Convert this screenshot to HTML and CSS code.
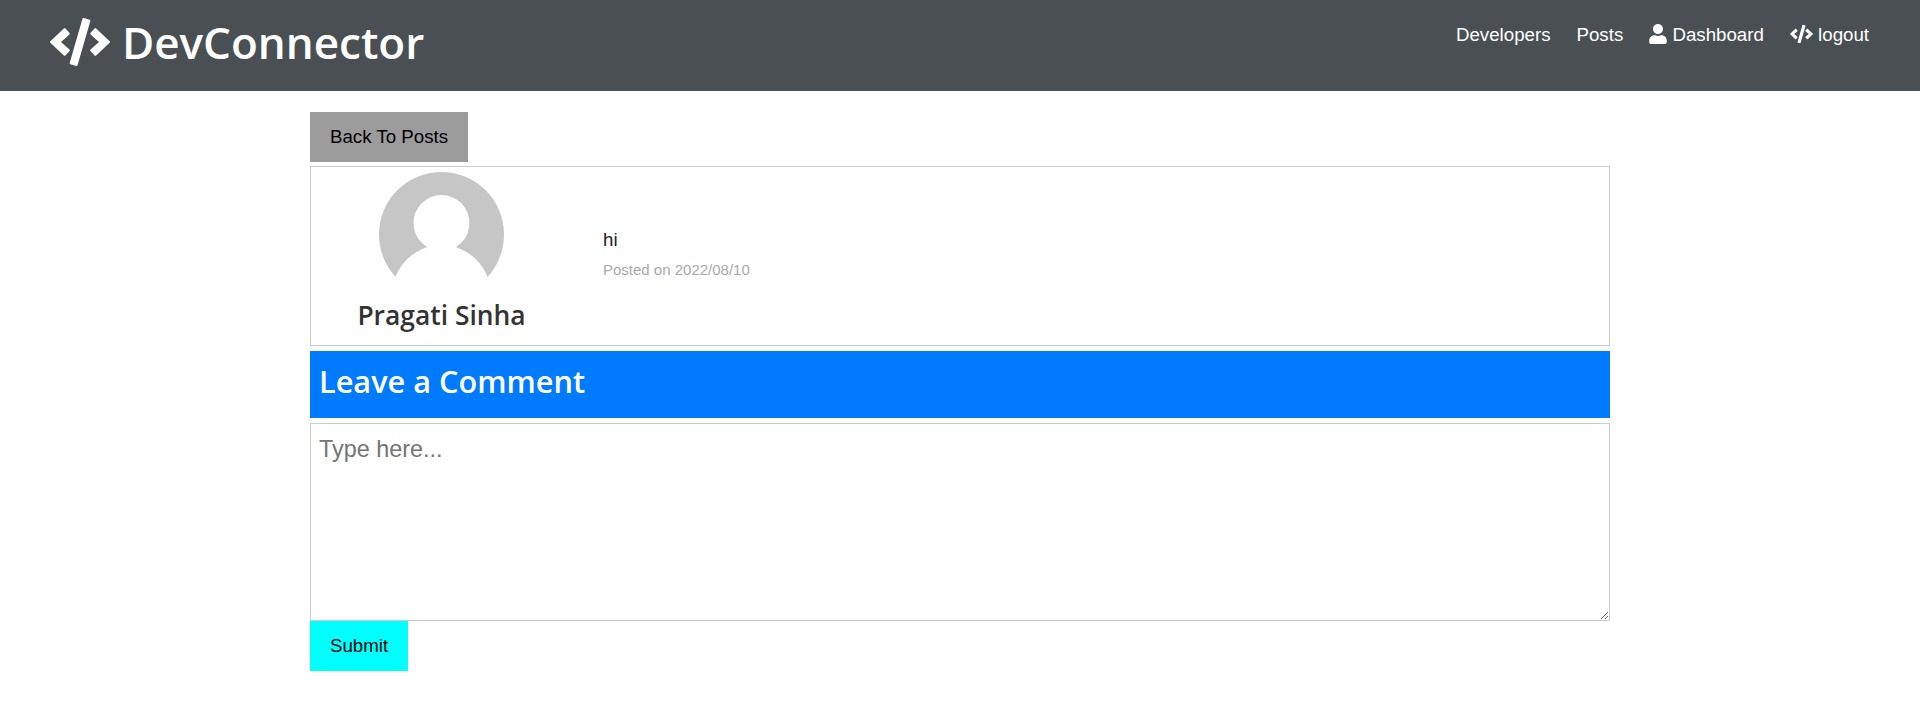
FILE: index.html
```html
<!DOCTYPE html>
<html lang="en">
<head>
<meta charset="utf-8">
<title>DevConnector</title>
<link rel="stylesheet" href="styles.css">
</head>
<body>
<nav class="navbar">
  <a class="brand" href="#">
    <svg class="brand-icon" viewBox="0 0 640 512"><path d="M278.9 511.5l-61-17.7c-6.4-1.8-10-8.5-8.2-14.9L346.2 8.7c1.8-6.4 8.5-10 14.9-8.2l61 17.7c6.4 1.8 10 8.5 8.2 14.9L293.8 503.3c-1.9 6.4-8.5 10.1-14.9 8.2zm-114-112.2l43.5-46.4c4.6-4.9 4.3-12.7-.8-17.2L117 256l90.6-79.7c5.1-4.5 5.5-12.3.8-17.2l-43.5-46.4c-4.5-4.8-12.1-5.1-17-.5L3.8 247.2c-5.1 4.7-5.1 12.8 0 17.5l144.1 135.1c4.9 4.6 12.5 4.4 17-.5zm327.2.6l144.1-135.1c5.1-4.7 5.1-12.8 0-17.5L492.1 112.1c-4.8-4.5-12.4-4.3-17 .5L431.6 159c-4.6 4.9-4.3 12.7.8 17.2L523 256l-90.6 79.7c-5.1 4.5-5.5 12.3-.8 17.2l43.5 46.4c4.5 4.9 12.1 5.1 17 .6z"/></svg>
    <span>DevConnector</span>
  </a>
  <ul class="nav-links">
    <li><a href="#">Developers</a></li>
    <li><a href="#">Posts</a></li>
    <li><a href="#"><svg class="nav-icon user" viewBox="0 0 448 512"><path d="M224 256c70.7 0 128-57.3 128-128S294.7 0 224 0 96 57.3 96 128s57.3 128 128 128zm89.6 32h-16.7c-22.2 10.2-46.9 16-72.9 16s-50.6-5.8-72.9-16h-16.7C60.2 288 0 348.2 0 422.4V464c0 26.5 21.5 48 48 48h352c26.5 0 48-21.5 48-48v-41.6c0-74.2-60.2-134.4-134.4-134.4z"/></svg> Dashboard</a></li>
    <li><a href="#"><svg class="nav-icon code" viewBox="0 0 640 512"><path d="M278.9 511.5l-61-17.7c-6.4-1.8-10-8.5-8.2-14.9L346.2 8.7c1.8-6.4 8.5-10 14.9-8.2l61 17.7c6.4 1.8 10 8.5 8.2 14.9L293.8 503.3c-1.9 6.4-8.5 10.1-14.9 8.2zm-114-112.2l43.5-46.4c4.6-4.9 4.3-12.7-.8-17.2L117 256l90.6-79.7c5.1-4.5 5.5-12.3.8-17.2l-43.5-46.4c-4.5-4.8-12.1-5.1-17-.5L3.8 247.2c-5.1 4.7-5.1 12.8 0 17.5l144.1 135.1c4.9 4.6 12.5 4.4 17-.5zm327.2.6l144.1-135.1c5.1-4.7 5.1-12.8 0-17.5L492.1 112.1c-4.8-4.5-12.4-4.3-17 .5L431.6 159c-4.6 4.9-4.3 12.7.8 17.2L523 256l-90.6 79.7c-5.1 4.5-5.5 12.3-.8 17.2l43.5 46.4c4.5 4.9 12.1 5.1 17 .6z"/></svg> logout</a></li>
  </ul>
</nav>
<main class="container">
  <a class="btn btn-back" href="#">Back To Posts</a>
  <section class="post">
    <div class="author">
      <svg class="avatar" viewBox="0 0 125 125">
        <defs><clipPath id="avatar-clip"><rect width="125" height="108"/></clipPath></defs>
        <g clip-path="url(#avatar-clip)">
          <circle cx="62.5" cy="62.5" r="62.5" fill="#c6c6c6"/>
          <circle cx="62.5" cy="51" r="28" fill="#fff"/>
          <ellipse cx="62.5" cy="125" rx="50" ry="52" fill="#fff"/>
        </g>
      </svg>
      <h4 class="author-name">Pragati Sinha</h4>
    </div>
    <div class="post-body">
      <p class="post-text">hi</p>
      <p class="post-date">Posted on 2022/08/10</p>
    </div>
  </section>
  <div class="comment-head"><h3>Leave a Comment</h3></div>
  <form class="comment-form">
    <textarea class="comment-input" placeholder="Type here..."></textarea>
    <button class="btn btn-submit" type="button">Submit</button>
  </form>
</main>
</body>
</html>
```

FILE: styles.css
```css
* {
  box-sizing: border-box;
}

body {
  margin: 0;
  background: #fff;
  color: #333;
  font-family: "Liberation Sans", Arial, sans-serif;
  font-size: 18px;
}

a {
  text-decoration: none;
  color: inherit;
}

.navbar {
  display: flex;
  justify-content: space-between;
  align-items: flex-start;
  height: 91px;
  padding: 0 51px 0 50px;
  background: #4a4f54;
  color: #fff;
}

.brand {
  display: flex;
  align-items: center;
  gap: 12px;
  height: 84px;
  font-family: "Open Sans", sans-serif;
  font-size: 44px;
  font-weight: 600;
}

.brand-icon {
  width: 60px;
  height: 48px;
  fill: #fff;
}

.nav-links {
  display: flex;
  gap: 26px;
  margin: 0;
  padding: 24px 0 0;
  list-style: none;
  font-size: 18.7px;
  line-height: 21px;
}

.nav-icon {
  fill: #fff;
  height: 20px;
  vertical-align: -3px;
}

.nav-icon.user {
  width: 18px;
}

.nav-icon.code {
  width: 23px;
}

.container {
  display: flex;
  flex-direction: column;
  align-items: flex-start;
  width: 1300px;
  margin: 21px auto 0;
}

.btn {
  display: block;
  height: 50px;
  padding: 0 20px;
  border: 0;
  color: #000;
  font-family: inherit;
  font-size: 18.7px;
  line-height: 50px;
}

.btn-back {
  background: #9c9c9c;
}

.post {
  display: flex;
  align-items: center;
  width: 100%;
  height: 180px;
  margin-top: 4px;
  border: 1px solid #ccc;
}

.author {
  display: flex;
  flex-direction: column;
  align-items: center;
  align-self: flex-start;
  width: 261px;
  padding-top: 5px;
}

.avatar {
  display: block;
  width: 125px;
  height: 125px;
}

.author-name {
  margin: 2px 0 0;
  color: #333;
  font-family: "Open Sans", sans-serif;
  font-size: 26.4px;
  font-weight: 600;
  line-height: 33px;
}

.post-body {
  margin-left: 31px;
  padding-bottom: 3px;
}

.post-text {
  margin: 0;
  color: #222;
  font-size: 18.7px;
  line-height: 21px;
}

.post-date {
  margin: 10px 0 0;
  color: #aaa;
  font-size: 15px;
  line-height: 20px;
}

.comment-head {
  display: flex;
  align-items: center;
  width: 100%;
  height: 67px;
  margin-top: 5px;
  padding: 0 0 8px 9px;
  background: #007bff;
  color: #fff;
}

.comment-head h3 {
  margin: 0;
  font-family: "Open Sans", sans-serif;
  font-size: 30.7px;
  font-weight: 600;
}

.comment-form {
  display: flex;
  flex-direction: column;
  align-items: flex-start;
  width: 100%;
  margin-top: 5px;
}

.comment-input {
  display: block;
  width: 100%;
  height: 198px;
  padding: 12px 8px;
  border: 1px solid #ccc;
  font-family: "Liberation Sans", Arial, sans-serif;
  font-size: 23.4px;
  outline: none;
}

.btn-submit {
  background: #0ff;
}
```
